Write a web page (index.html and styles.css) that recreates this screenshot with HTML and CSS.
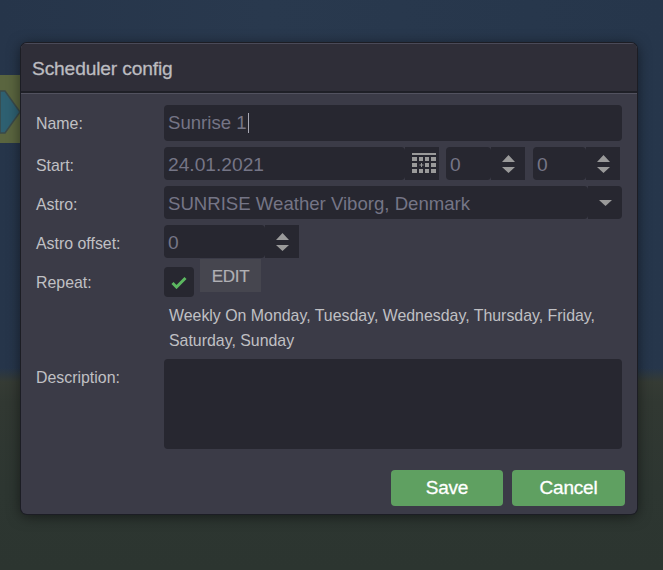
FILE: index.html
```html
<!DOCTYPE html>
<html lang="en">
<head>
<meta charset="utf-8">
<title>Scheduler config</title>
<link rel="stylesheet" href="styles.css">
</head>
<body>
<div class="backdrop">
  <div class="node">
    <svg class="node-hex" width="22" height="44" viewBox="0 0 22 44"><path d="M0 1h5l15 21L5 43H0z" fill="#2e6071" stroke="#3a4a4a" stroke-width="1.500"/></svg>
  </div>
  <div class="ground"></div>
</div>
<section class="dialog">
  <header class="dialog-head">Scheduler config</header>
  <div class="form">
    <div class="row row-name">
      <div class="label">Name:</div>
      <div class="field grow name-field"><span>Sunrise 1</span><i class="caret"></i></div>
    </div>
    <div class="row row-start">
      <div class="label">Start:</div>
      <div class="group date">
        <div class="field grow date-text">24.01.2021</div>
        <div class="addon addon-cal">
          <svg width="24" height="22" viewBox="0 0 24 22"><g fill="#9a9a9a"><rect x="0" y="0" width="24" height="2"/><rect x="0" y="4" width="5" height="4"/><rect x="7" y="4" width="4" height="4"/><rect x="13" y="4" width="4" height="4"/><rect x="19" y="4" width="5" height="4"/><rect x="0" y="10" width="5" height="4"/><rect x="13" y="10" width="4" height="4"/><rect x="19" y="10" width="5" height="4"/><path d="M8 11.500h1V10h1v1.500h1.500v1H10V14H9v-1.500H7.500v-1H8z"/><rect x="0" y="16" width="5" height="4"/><rect x="7" y="16" width="4" height="4"/><rect x="13" y="16" width="4" height="4"/><rect x="19" y="16" width="5" height="4"/></g></svg>
        </div>
      </div>
      <div class="group spin-a">
        <div class="field grow date-text">0</div>
        <div class="addon"><svg width="13" height="18" viewBox="0 0 13 18"><path d="M6.500 0L13 7H0zM0 12h13l-6.500 6z" fill="#9a9a9a"/></svg></div>
      </div>
      <div class="group spin-b">
        <div class="field grow date-text">0</div>
        <div class="addon"><svg width="13" height="18" viewBox="0 0 13 18"><path d="M6.500 0L13 7H0zM0 12h13l-6.500 6z" fill="#9a9a9a"/></svg></div>
      </div>
    </div>
    <div class="row row-astro">
      <div class="label">Astro:</div>
      <div class="group grow">
        <div class="field grow">SUNRISE Weather Viborg, Denmark</div>
        <div class="addon addon-drop"><svg width="13" height="6" viewBox="0 0 13 6"><path d="M0 0h13L6.500 6z" fill="#9a9a9a"/></svg></div>
      </div>
    </div>
    <div class="row row-offset">
      <div class="label">Astro offset:</div>
      <div class="group offset">
        <div class="field grow date-text">0</div>
        <div class="addon"><svg width="13" height="18" viewBox="0 0 13 18"><path d="M6.500 0L13 7H0zM0 12h13l-6.500 6z" fill="#9a9a9a"/></svg></div>
      </div>
    </div>
    <div class="row row-repeat">
      <div class="label">Repeat:</div>
      <div class="check">
        <svg width="16" height="13" viewBox="0 0 16 13"><path d="M1.500 7l4 4 9-9" fill="none" stroke="#5cb860" stroke-width="3"/></svg>
      </div>
      <div class="edit">EDIT</div>
    </div>
    <p class="summary">Weekly On Monday, Tuesday, Wednesday, Thursday, Friday, Saturday, Sunday</p>
    <div class="row row-desc">
      <div class="label">Description:</div>
      <div class="field grow area"></div>
    </div>
    <footer class="actions">
      <button class="btn btn-save">Save</button>
      <button class="btn btn-cancel">Cancel</button>
    </footer>
  </div>
</section>
</body>
</html>
```
FILE: styles.css
```css
* { box-sizing: border-box; }
html, body { margin: 0; padding: 0; height: 100%; overflow: hidden; }
body {
  font-family: "Liberation Sans", Arial, sans-serif;
  background: #27374c;
  width: 663px;
  height: 570px;
}
.backdrop { position: absolute; inset: 0; background: linear-gradient(90deg, #26354a, #29394e 40%, #26364b); }
.ground {
  position: absolute; left: 0; right: 0; top: 368px; bottom: 0;
  background: linear-gradient(180deg, rgba(39, 55, 76, 0) 0, #353b34 14px, #313832 34px, #2d3631 120px, #2c3530 100%);
}
.node {
  position: absolute; left: 0; top: 75px; width: 24px; height: 68px;
  background: #5a653f;
}
.node-hex { position: absolute; left: 0; top: 15px; }
.dialog {
  position: absolute; left: 21px; top: 43px; width: 616px; height: 471px;
  background: #3b3b47;
  border-radius: 6px;
  box-shadow: 0 0 0 1px #1c1d24, 0 2px 14px rgba(0, 0, 0, 0.55);
  overflow: hidden;
}
.dialog-head {
  height: 50px;
  padding: 15px 0 0 11px;
  background: #2f2e38;
  border-top: 1px solid #4a4a58;
  border-bottom: 2px solid #1f2027;
  box-shadow: 0 1px 0 #52525f;
  color: #bcbcc0;
  font-size: 19.200px;
  font-weight: 400;
  line-height: 20px;
  -webkit-text-stroke: 0.3px #bcbcc0;
  letter-spacing: -0.15px;
}
.form { padding: 12px 15px 0 15px; }
.row { display: flex; align-items: flex-start; }
.label {
  flex: 0 0 128px;
  color: #c0c0c4;
  font-size: 15.900px;
  line-height: 18px;
}
.grow { flex: 1 1 auto; min-width: 0; }
.field {
  background: #272730;
  color: #757586;
  border-radius: 4px;
  font-size: 18.600px;
  padding: 2px 4px 0;
  display: flex;
  align-items: center;
}
.date-text { font-size: 19.200px; padding-top: 2px; }
.group { display: flex; }
.addon {
  flex: 0 0 34px;
  background: #272730;
  display: flex;
  align-items: center;
  justify-content: center;
}
.addon-drop { border-radius: 0 4px 4px 0; }
.row-name { height: 36px; margin-bottom: 6px; }
.row-name .label { padding-top: 10px; }
.name-field { height: 36px; padding-top: 0; }
.caret { display: inline-block; width: 1px; height: 20px; background: #a8a8b4; margin-left: 1px; }
.row-start { height: 33px; margin-bottom: 6px; }
.row-start .label { padding-top: 10px; }
.date { width: 275px; height: 33px; margin-right: 7px; }
.addon-cal { padding-left: 3px; }
.spin-a { width: 79px; height: 33px; margin-right: 8px; }
.spin-b { width: 87px; height: 33px; }
.row-astro { height: 33px; margin-bottom: 6px; }
.row-astro .label { padding-top: 10px; }
.row-astro .group { height: 33px; }
.row-offset { height: 33px; }
.row-offset .label { padding-top: 10px; }
.offset { width: 135px; height: 33px; }
.row-repeat { height: 40px; padding-top: 1px; }
.row-repeat .label { padding-top: 15px; }
.check {
  width: 30px; height: 30px; margin-top: 8px;
  background: #272730;
  border-radius: 4px;
  display: flex; align-items: center; justify-content: center;
}
.edit {
  width: 61px; height: 33px; margin-left: 6px;
  background: #46464f;
  color: #b0b0b4;
  font-size: 17px;
  line-height: 35px;
  text-align: center;
  -webkit-text-stroke: 0.2px #b0b0b4;
  letter-spacing: -0.3px;
}
.summary {
  margin: 0 0 0 133px;
  width: 440px;
  color: #c0c0c4;
  font-size: 15.900px;
  line-height: 25px;
  padding-top: 5px;
}
.row-desc { margin-top: 6px; height: 90px; }
.row-desc .label { padding-top: 10px; }
.area { height: 90px; }
.actions { display: flex; justify-content: flex-end; gap: 9px; margin: 21px -3px 0 0; }
.btn {
  height: 36px;
  border: 0;
  border-radius: 4px;
  background: #5fa061;
  color: #fff;
  font-family: inherit;
  font-size: 19px;
  -webkit-text-stroke: 0.3px #fff;
  letter-spacing: -0.2px;
  padding: 0;
}
.btn-save { width: 112px; }
.btn-cancel { width: 113px; }
```
